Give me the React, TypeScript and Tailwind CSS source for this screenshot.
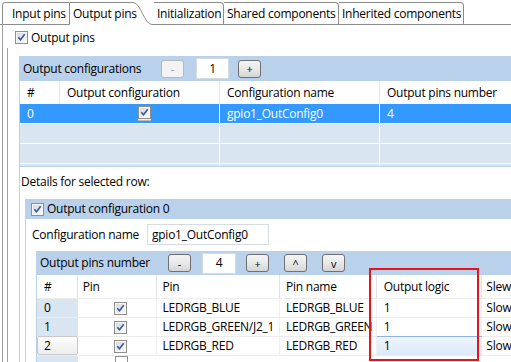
import React from "react";

function Check() {
  return (
    <svg width="13" height="13" viewBox="0 0 13 13" className="block shrink-0">
      <defs>
        <linearGradient id="cbg" x1="0" y1="0" x2="1" y2="1">
          <stop offset="0" stopColor="#d8d8d8" />
          <stop offset="1" stopColor="#fcfcfc" />
        </linearGradient>
      </defs>
      <rect x="0.5" y="0.5" width="12" height="12" fill="#f6f6f6" stroke="#8e8f8f" />
      <rect x="2" y="2" width="9" height="9" fill="url(#cbg)" />
      <path d="M3.3 6.3 L5.5 8.7 L9.7 3.3" stroke="#3a5a9c" strokeWidth="1.7" fill="none" />
    </svg>
  );
}

function Btn({ label, disabled }: { label: string; disabled?: boolean }) {
  return (
    <div
      className={
        disabled
          ? "h-[18px] w-[23px] shrink-0 rounded-[3px] border border-[#b5b9bc] bg-[#f3f3f3] flex items-center justify-center text-[11px] leading-none text-[#8a8a8a]"
          : "h-[18px] w-[23px] shrink-0 rounded-[3px] border border-[#707070] bg-gradient-to-b from-[#f4f4f4] via-[#e9e9e9] to-[#d4d4d4] flex items-center justify-center text-[11px] leading-none text-black"
      }
    >
      {label}
    </div>
  );
}

function Field({ value, w }: { value: string; w: string }) {
  return (
    <div className={`${w} h-[21px] shrink-0 border border-[#d5dbe2] bg-white flex items-center justify-center`}>
      {value}
    </div>
  );
}

export default function App() {
  return (
    <div className="w-[511px] h-[362px] overflow-hidden bg-white relative font-['Open_Sans',sans-serif] text-[12px] leading-[16px] tracking-[-0.25px] text-black">
      {/* Tabs */}
      <div className="flex h-[25px] pt-[2px] whitespace-nowrap">
        <div className="w-[2px] border-b border-[#8c8c8c]" />
        <div className="h-[23px] w-[68px] border border-[#8c8c8c] rounded-tl-[3px] pl-[9px] flex items-center">Input pins</div>
        <div className="h-[23px] w-[62px] border-t border-[#8c8c8c] pl-[3px] flex items-center">Output pins</div>
        <svg width="22" height="23" viewBox="0 0 22 23" className="block shrink-0">
          <path d="M0 0.5 L1 0.5 C9 0.5 12 22.5 20 22.5 L22 22.5" stroke="#8c8c8c" fill="none" />
        </svg>
        <div className="h-[23px] w-[70px] border-t border-r border-b border-[#8c8c8c] rounded-tr-[4px] pl-[3px] flex items-center">Initialization</div>
        <div className="h-[23px] w-[115px] border-t border-r border-b border-[#8c8c8c] rounded-tr-[4px] pl-[3px] flex items-center">Shared components</div>
        <div className="h-[23px] w-[125px] border-t border-r border-b border-[#8c8c8c] rounded-tr-[4px] pl-[3px] flex items-center">Inherited components</div>
        <div className="flex-1 border-b border-[#8c8c8c]" />
      </div>

      {/* Content */}
      <div className="ml-[2px] border-l border-[#a0a0a0] h-[337px] w-[560px]">
        <div className="pt-[6px] pl-[12px] flex items-center gap-[3px] h-[19px]">
          <Check />
          <span>Output pins</span>
        </div>
        <div className="ml-[4px] mt-[4px] border-l border-[#a0a0a0] pt-[8px] pl-[11px] h-[320px]">
          {/* Panel A */}
          <div className="border-l border-[#b9d1ea] h-[320px]">
            <div className="h-[25px] bg-[#b9d1ea] flex items-center pl-[3px]">
              <span className="w-[138px] shrink-0">Output configurations</span>
              <Btn label="-" disabled />
              <div className="ml-[12px]">
                <Field value="1" w="w-[33px]" />
              </div>
              <div className="ml-[9px]">
                <Btn label="+" />
              </div>
            </div>
            {/* Table A */}
            <div className="border-b border-[#b9d1ea]">
              <div className="flex h-[23px] items-center bg-white">
                <div className="w-[40px] h-full border-r border-[#e6e6e6] pl-[7px] flex items-center">#</div>
                <div className="w-[160px] h-full border-r border-[#e6e6e6] pl-[7px] flex items-center">Output configuration</div>
                <div className="w-[160px] h-full border-r border-[#e6e6e6] pl-[7px] flex items-center">Configuration name</div>
                <div className="w-[160px] h-full pl-[7px] flex items-center">Output pins number</div>
              </div>
              <div className="flex h-[20px] bg-[#3399ff] text-white border-b border-white">
                <div className="w-[40px] h-full pl-[7px] flex items-center">0</div>
                <div className="w-[160px] h-full border-l border-[#3399ff] border-r border-r-white flex items-center justify-center pl-[8px]">
                  <div className="bg-[#f0f0f0] border-b border-[#b8b8b8] pb-[1px]">
                    <Check />
                  </div>
                </div>
                <div className="w-[160px] h-full border-r border-white pl-[7px] flex items-center">gpio1_OutConfig0</div>
                <div className="w-[160px] h-full pl-[7px] flex items-center">4</div>
              </div>
              {[0, 1].map((i) => (
                <div key={i} className="flex h-[20px] bg-[#dae5f2] border-b border-white">
                  <div className="w-[40px] h-full" />
                  <div className="w-[160px] h-full border-l border-[#dae5f2] border-r border-r-white" />
                  <div className="w-[160px] h-full border-r border-white" />
                  <div className="w-[160px] h-full" />
                </div>
              ))}
              <div className="flex h-[2px] bg-[#dae5f2]">
                <div className="w-[40px] h-full" />
                <div className="w-[160px] h-full border-l border-[#dae5f2] border-r border-r-white" />
                <div className="w-[160px] h-full border-r border-white" />
              </div>
            </div>

            <div className="mt-[7px] h-[16px] pl-[1px] flex items-center">Details for selected row:</div>

            {/* Panel B */}
            <div className="mt-[9px] ml-[5px] border-l border-[#b9d1ea] h-[200px]">
              <div className="h-[20px] bg-[#b9d1ea] flex items-center pl-[5px] gap-[3px]">
                <Check />
                <span>Output configuration 0</span>
              </div>
              <div className="mt-[5px] h-[21px] flex items-center pl-[6px]">
                <span className="w-[115px] shrink-0">Configuration name</span>
                <div className="w-[122px] h-[21px] border border-[#d5dbe2] flex items-center pl-[4px]">gpio1_OutConfig0</div>
              </div>

              {/* Panel C */}
              <div className="mt-[6px] ml-[10px] border-l border-[#b9d1ea] h-[140px]">
                <div className="h-[24px] bg-[#b9d1ea] flex items-center pl-[3px]">
                  <span className="w-[128px] shrink-0">Output pins number</span>
                  <Btn label="-" />
                  <div className="ml-[11px]">
                    <Field value="4" w="w-[34px]" />
                  </div>
                  <div className="ml-[10px]">
                    <Btn label="+" />
                  </div>
                  <div className="ml-[15px]">
                    <Btn label="^" />
                  </div>
                  <div className="ml-[15px]">
                    <Btn label="v" />
                  </div>
                </div>
                {/* Table C */}
                <div className="whitespace-nowrap">
                  <div className="flex h-[24px] bg-white border-b border-[#ececec]">
                    <div className="w-[41px] h-full border-r border-[#e3e3e3] pl-[7px] flex items-center">#</div>
                    <div className="w-[79px] h-full border-r border-[#e3e3e3] pl-[5px] flex items-center">Pin</div>
                    <div className="w-[124px] h-full border-r border-[#e3e3e3] pl-[6px] flex items-center">Pin</div>
                    <div className="w-[97px] h-full border-r border-[#e3e3e3] pl-[6px] flex items-center">Pin name</div>
                    <div className="w-[106px] h-full border-r border-[#e3e3e3] pl-[7px] flex items-center">Output logic</div>
                    <div className="w-[80px] h-full pl-[4px] flex items-center">Slew</div>
                  </div>
                  {[
                    ["0", "LEDRGB_BLUE", "LEDRGB_BLUE"],
                    ["1", "LEDRGB_GREEN/J2_1", "LEDRGB_GREEN"],
                    ["2", "LEDRGB_RED", "LEDRGB_RED"],
                  ].map(([n, pin, name]) => (
                    <div key={n} className="flex h-[19px] border-b border-[#ececec]">
                      {n === "2" ? (
                        <div className="w-[41px] h-[19px] -mt-px rounded-[2px] border border-[#c9c9c9] bg-gradient-to-b from-[#fdfdfd] to-[#ededed] pl-[6px] flex items-center">
                          {n}
                        </div>
                      ) : (
                        <div className="w-[41px] h-full bg-[#dae5f2] pl-[7px] flex items-center">{n}</div>
                      )}
                      <div className="w-[79px] h-full border-r border-[#f0f0f0] flex items-center justify-center pl-[8px]">
                        <Check />
                      </div>
                      <div className="w-[124px] h-full border-r border-[#f0f0f0] pl-[6px] flex items-center overflow-hidden">{pin}</div>
                      <div className="w-[97px] h-full border-r border-[#f0f0f0] pl-[6px] flex items-center overflow-hidden">{name}</div>
                      {n === "2" ? (
                        <div className="w-[106px] h-[19px] -mt-px border-t border-[#8ab4e4] bg-gradient-to-b from-[#eef5fd] to-[#dbeafa] pl-[7px] flex items-center">1</div>
                      ) : (
                        <div className="w-[106px] h-full border-r border-[#f0f0f0] pl-[7px] flex items-center">1</div>
                      )}
                      <div className="w-[80px] h-full pl-[4px] flex items-center">Slow</div>
                    </div>
                  ))}
                  <div className="flex h-[8px]">
                    <div className="w-[41px] h-full bg-[#dae5f2]" />
                    <div className="w-[79px] h-full flex justify-center pl-[8px]">
                      <div className="w-[13px] h-[8px] border-t border-l border-r border-[#8e8f8f]" />
                    </div>
                  </div>
                </div>
              </div>
            </div>
          </div>
        </div>
      </div>

      {/* Red highlight */}
      <div className="absolute left-[369px] top-[268px] w-[110px] h-[93px] border-2 border-[#e8141c]" />
    </div>
  );
}
